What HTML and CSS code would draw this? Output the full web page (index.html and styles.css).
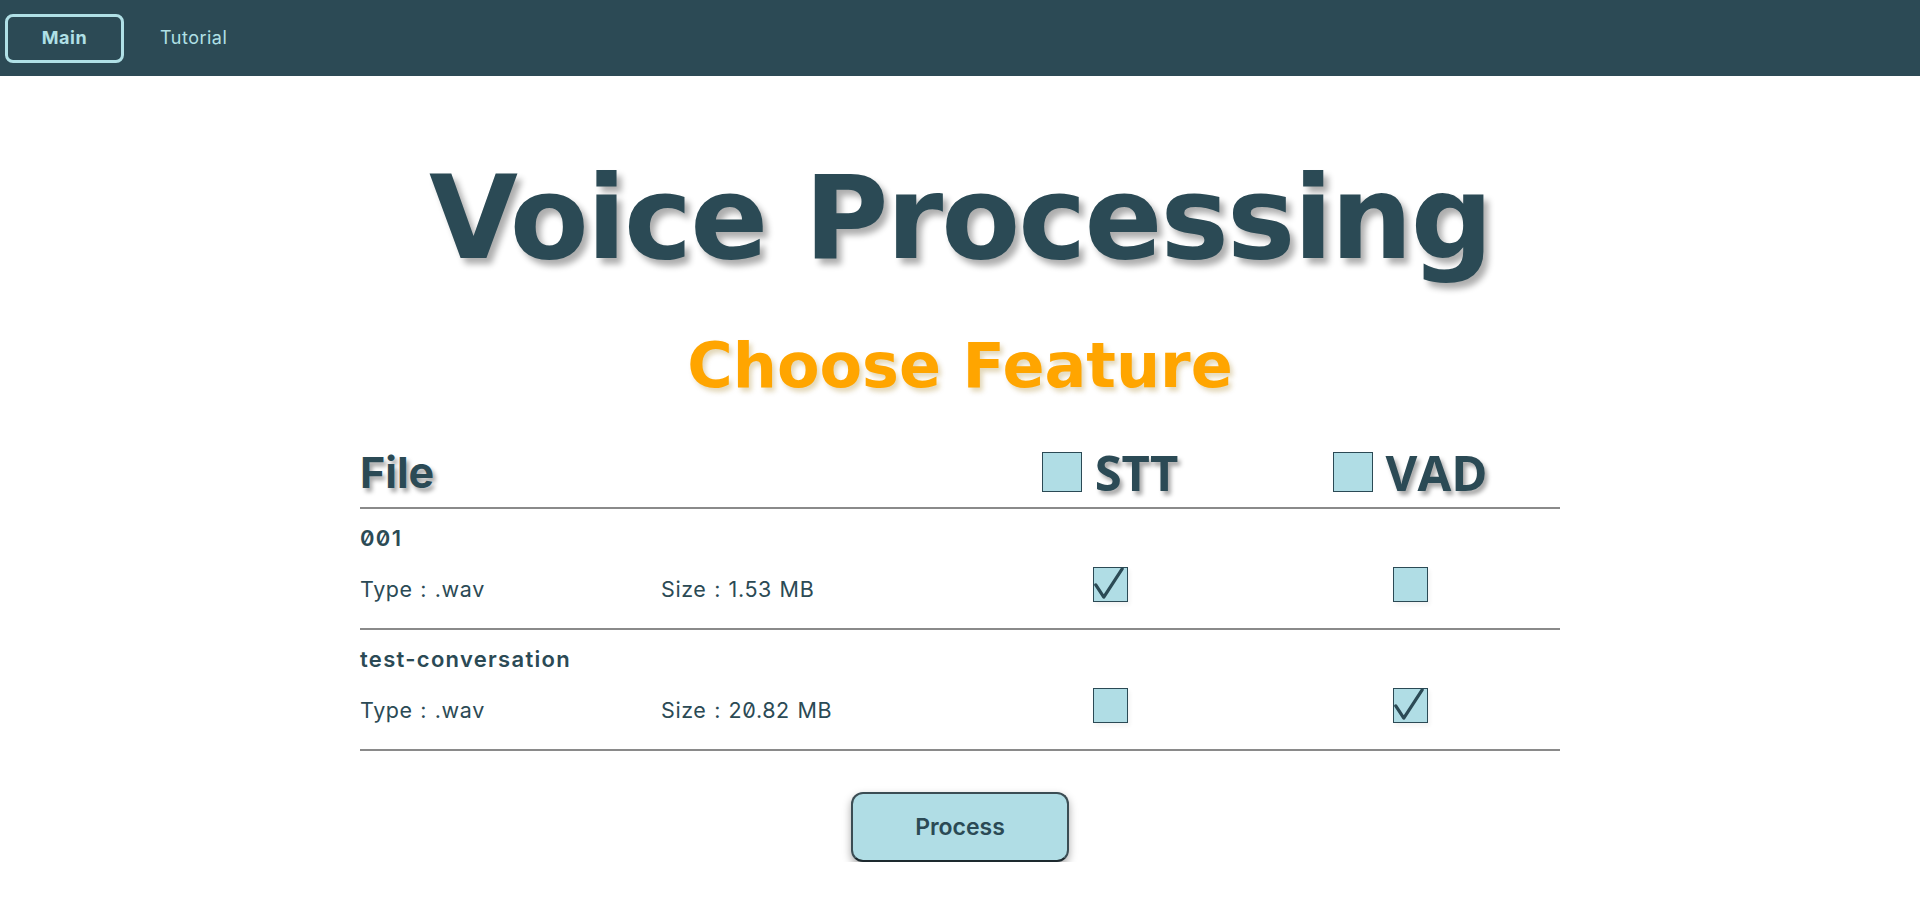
FILE: index.html
```html
<!DOCTYPE html>
<html lang="en">
<head>
<meta charset="utf-8">
<title>Voice Processing</title>
<link rel="stylesheet" href="styles.css">
</head>
<body>
<nav class="navbar">
  <a class="nav-btn nav-active">Main</a>
  <a class="nav-btn">Tutorial</a>
</nav>
<main class="page">
  <h1 class="title">Voice Processing</h1>
  <h2 class="subtitle">Choose Feature</h2>
  <section class="table">
    <div class="row head">
      <div class="cell-file">File</div>
      <div class="cell-head"><span class="box big"></span><span class="head-label">STT</span></div>
      <div class="cell-head"><span class="box big"></span><span class="head-label">VAD</span></div>
    </div>
    <div class="row item">
      <div class="file-info">
        <div class="file-name">001</div>
        <div class="file-meta"><span class="meta-type">Type : .wav</span><span>Size : 1.53 MB</span></div>
      </div>
      <div class="cell-box"><span class="box small"><svg viewBox="0 0 35 35" class="tick"><path d="M4 19 L12.5 32 L32 2"/></svg></span></div>
      <div class="cell-box"><span class="box small"></span></div>
    </div>
    <div class="row item">
      <div class="file-info">
        <div class="file-name">test-conversation</div>
        <div class="file-meta"><span class="meta-type">Type : .wav</span><span>Size : 20.82 MB</span></div>
      </div>
      <div class="cell-box"><span class="box small"></span></div>
      <div class="cell-box"><span class="box small"><svg viewBox="0 0 35 35" class="tick"><path d="M4 19 L12.5 32 L32 2"/></svg></span></div>
    </div>
  </section>
  <div class="actions">
    <button class="process-btn">Process</button>
  </div>
</main>
</body>
</html>
```
FILE: styles.css
```css
html, body {
  margin: 0;
  padding: 0;
  background: #ffffff;
}
body {
  font-family: Inter, "Noto Sans", sans-serif;
  color: #2b4a55;
  font-variant-numeric: slashed-zero;
  font-feature-settings: "zero" 1;
}
.navbar {
  height: 76px;
  background: #2c4a55;
  display: flex;
  align-items: center;
  padding-left: 5px;
  gap: 36px;
  box-sizing: border-box;
}
.nav-btn {
  color: #b0e0e6;
  font-size: 18px;
  letter-spacing: 0.5px;
  line-height: 22px;
}
.nav-active {
  width: 119px;
  height: 49px;
  box-sizing: border-box;
  border: 3px solid #b0e0e6;
  border-radius: 8px;
  display: flex;
  align-items: center;
  justify-content: center;
  font-weight: 700;
}
.page {
  display: flex;
  flex-direction: column;
  align-items: center;
}
.title {
  margin: 73px 0 0;
  font-family: "DejaVu Sans", sans-serif;
  font-weight: 700;
  font-size: 115px;
  line-height: 138px;
  letter-spacing: -2px;
  color: #2b4a55;
  text-shadow: 5px 6px 6px rgba(0, 0, 0, 0.32);
}
.subtitle {
  margin: 42px 0 0;
  font-family: "DejaVu Sans", sans-serif;
  font-weight: 700;
  font-size: 62px;
  line-height: 74px;
  color: #ffa500;
  text-shadow: 3px 4px 5px rgba(150, 110, 0, 0.28);
}
.table {
  width: 1200px;
  margin-top: 39px;
}
.row {
  display: grid;
  grid-template-columns: 600px 300px 300px;
  border-bottom: 2px solid #8a8a8a;
}
.head {
  align-items: center;
  padding: 5px 0 10px;
}
.cell-file {
  font-weight: 700;
  font-size: 43px;
  line-height: 50px;
  text-shadow: 3px 4px 4px rgba(0, 0, 0, 0.35);
}
.cell-head {
  display: flex;
  align-items: center;
  justify-content: center;
  gap: 13px;
}
.head-label {
  font-family: "Open Sans", sans-serif;
  font-weight: 700;
  font-size: 49px;
  line-height: 50px;
  text-shadow: 3px 4px 4px rgba(0, 0, 0, 0.35);
}
.box {
  display: block;
  box-sizing: border-box;
  background: #b0dde5;
  border: 1.5px solid #2b4a55;
}
.box.big {
  width: 40px;
  height: 40px;
}
.box.small {
  width: 35px;
  height: 35px;
  box-shadow: 2px 3px 4px rgba(0, 0, 0, 0.05);
}
.tick {
  display: block;
  width: 100%;
  height: 100%;
  margin: -1.5px;
}
.tick path {
  fill: none;
  stroke: #2b4a55;
  stroke-width: 3.4;
  stroke-linecap: round;
  stroke-linejoin: round;
}
.file-info {
  padding: 14px 0 24px;
}
.file-name {
  font-weight: 600;
  font-size: 22px;
  line-height: 30px;
  letter-spacing: 1.3px;
}
.file-meta {
  margin-top: 21px;
  display: flex;
  font-size: 21.5px;
  line-height: 30px;
  letter-spacing: 0.6px;
  word-spacing: 1px;
}
.meta-type {
  width: 301px;
}
.cell-box {
  display: flex;
  justify-content: center;
  padding-top: 58px;
}
.actions {
  margin-top: 41px;
}
.process-btn {
  width: 218px;
  height: 70px;
  background: #b0dde5;
  border: 2px solid #3b4d54;
  border-bottom-color: #1d2a2f;
  border-radius: 12px;
  font-family: Inter, sans-serif;
  font-weight: 600;
  font-size: 23px;
  color: #2b4a55;
  box-shadow: 0 4px 9px rgba(0, 0, 0, 0.35);
  cursor: pointer;
}
```
